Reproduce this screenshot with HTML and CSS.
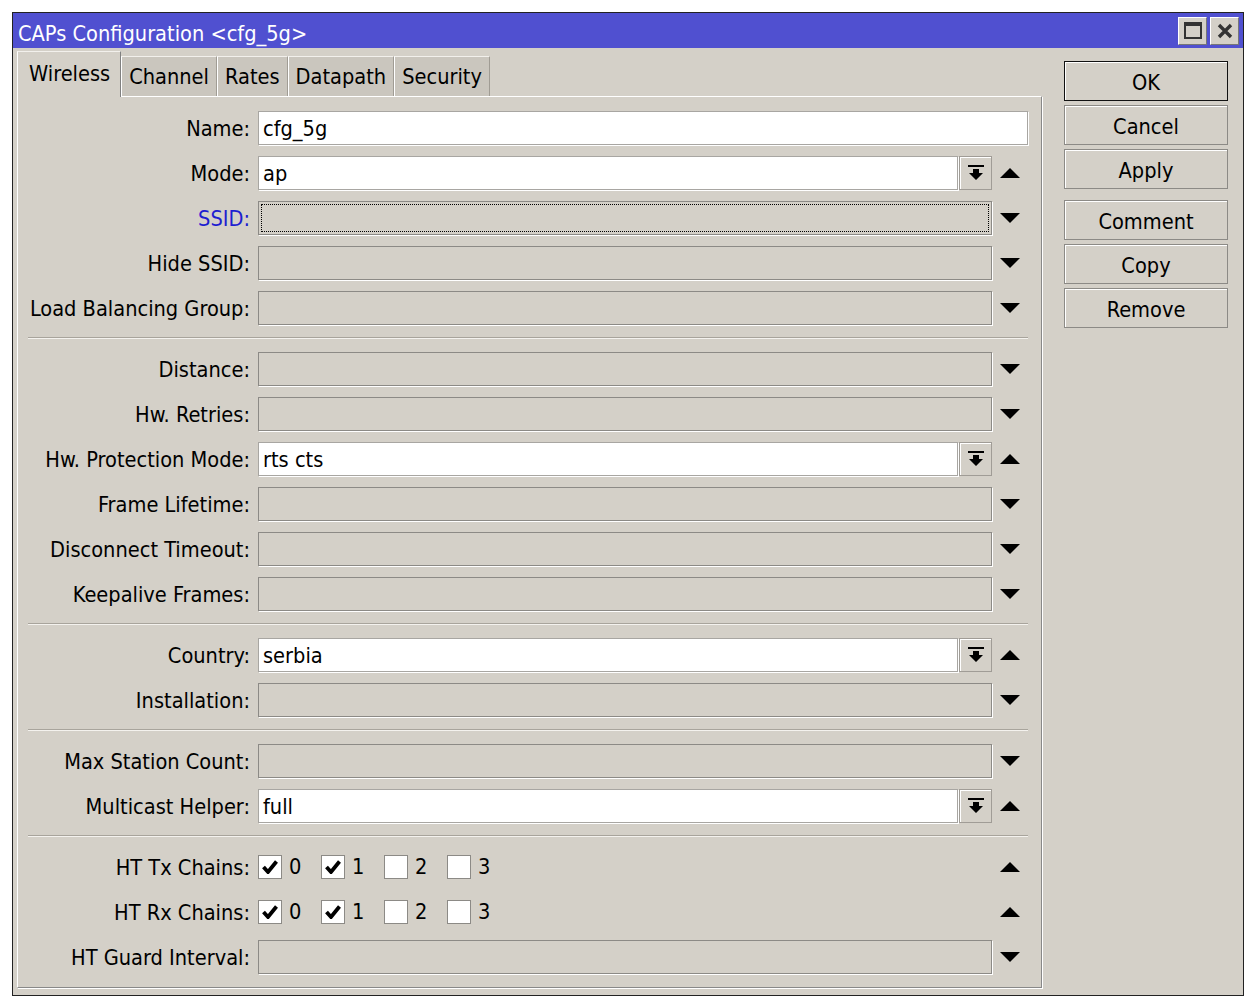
FILE: index.html
```html
<!DOCTYPE html>
<html lang="en">
  <head>
    <meta charset="UTF-8" />
    <title>CAPs Configuration</title>
    <link rel="stylesheet" href="styles.css">
  </head>
  <body>
    <div class="window">
      <div class="titlebar">
        <span class="title">CAPs Configuration &lt;cfg_5g&gt;</span>
        <div class="title-buttons">
          <div class="tbtn">
            <svg width="18" height="17" viewBox="0 0 18 17"><path d="M0 0h18v17H0zM2 4v11h14V4z" fill="#333"/></svg>
          </div>
          <div class="tbtn">
            <svg width="16" height="16" viewBox="0 0 16 16"><path d="M2 2l12 12M14 2L2 14" stroke="#333" stroke-width="3.4"/></svg>
          </div>
        </div>
      </div>

      <div class="content">
        <div class="main">
          <div class="tabs">
            <div class="tab active">Wireless</div>
            <div class="tab">Channel</div>
            <div class="tab">Rates</div>
            <div class="tab">Datapath</div>
            <div class="tab">Security</div>
          </div>

          <div class="panel">
            <div class="row">
              <div class="label">Name:</div>
              <div class="field">
                <div class="input white">cfg_5g</div>
              </div>
            </div>
            <div class="row">
              <div class="label">Mode:</div>
              <div class="field">
                <div class="input white">ap</div>
                <div class="drop"><svg width="16" height="15" viewBox="0 0 16 15"><path d="M0 0h16v2H0zM5 4h6v4h4l-7 7-7-7h4z"/></svg></div>
                <div class="arrow"><svg width="20" height="10" viewBox="0 0 20 10"><path d="M10 0L20 10H0z"/></svg></div>
              </div>
            </div>
            <div class="row">
              <div class="label link">SSID:</div>
              <div class="field">
                <div class="input focus"></div>
                <div class="arrow"><svg width="20" height="10" viewBox="0 0 20 10"><path d="M0 0h20L10 10z"/></svg></div>
              </div>
            </div>
            <div class="row">
              <div class="label">Hide SSID:</div>
              <div class="field">
                <div class="input"></div>
                <div class="arrow"><svg width="20" height="10" viewBox="0 0 20 10"><path d="M0 0h20L10 10z"/></svg></div>
              </div>
            </div>
            <div class="row">
              <div class="label">Load Balancing Group:</div>
              <div class="field">
                <div class="input"></div>
                <div class="arrow"><svg width="20" height="10" viewBox="0 0 20 10"><path d="M0 0h20L10 10z"/></svg></div>
              </div>
            </div>

            <div class="separator"></div>

            <div class="row">
              <div class="label">Distance:</div>
              <div class="field">
                <div class="input"></div>
                <div class="arrow"><svg width="20" height="10" viewBox="0 0 20 10"><path d="M0 0h20L10 10z"/></svg></div>
              </div>
            </div>
            <div class="row">
              <div class="label">Hw. Retries:</div>
              <div class="field">
                <div class="input"></div>
                <div class="arrow"><svg width="20" height="10" viewBox="0 0 20 10"><path d="M0 0h20L10 10z"/></svg></div>
              </div>
            </div>
            <div class="row">
              <div class="label">Hw. Protection Mode:</div>
              <div class="field">
                <div class="input white">rts cts</div>
                <div class="drop"><svg width="16" height="15" viewBox="0 0 16 15"><path d="M0 0h16v2H0zM5 4h6v4h4l-7 7-7-7h4z"/></svg></div>
                <div class="arrow"><svg width="20" height="10" viewBox="0 0 20 10"><path d="M10 0L20 10H0z"/></svg></div>
              </div>
            </div>
            <div class="row">
              <div class="label">Frame Lifetime:</div>
              <div class="field">
                <div class="input"></div>
                <div class="arrow"><svg width="20" height="10" viewBox="0 0 20 10"><path d="M0 0h20L10 10z"/></svg></div>
              </div>
            </div>
            <div class="row">
              <div class="label">Disconnect Timeout:</div>
              <div class="field">
                <div class="input"></div>
                <div class="arrow"><svg width="20" height="10" viewBox="0 0 20 10"><path d="M0 0h20L10 10z"/></svg></div>
              </div>
            </div>
            <div class="row">
              <div class="label">Keepalive Frames:</div>
              <div class="field">
                <div class="input"></div>
                <div class="arrow"><svg width="20" height="10" viewBox="0 0 20 10"><path d="M0 0h20L10 10z"/></svg></div>
              </div>
            </div>

            <div class="separator"></div>

            <div class="row">
              <div class="label">Country:</div>
              <div class="field">
                <div class="input white">serbia</div>
                <div class="drop"><svg width="16" height="15" viewBox="0 0 16 15"><path d="M0 0h16v2H0zM5 4h6v4h4l-7 7-7-7h4z"/></svg></div>
                <div class="arrow"><svg width="20" height="10" viewBox="0 0 20 10"><path d="M10 0L20 10H0z"/></svg></div>
              </div>
            </div>
            <div class="row">
              <div class="label">Installation:</div>
              <div class="field">
                <div class="input"></div>
                <div class="arrow"><svg width="20" height="10" viewBox="0 0 20 10"><path d="M0 0h20L10 10z"/></svg></div>
              </div>
            </div>

            <div class="separator"></div>

            <div class="row">
              <div class="label">Max Station Count:</div>
              <div class="field">
                <div class="input"></div>
                <div class="arrow"><svg width="20" height="10" viewBox="0 0 20 10"><path d="M0 0h20L10 10z"/></svg></div>
              </div>
            </div>
            <div class="row">
              <div class="label">Multicast Helper:</div>
              <div class="field">
                <div class="input white">full</div>
                <div class="drop"><svg width="16" height="15" viewBox="0 0 16 15"><path d="M0 0h16v2H0zM5 4h6v4h4l-7 7-7-7h4z"/></svg></div>
                <div class="arrow"><svg width="20" height="10" viewBox="0 0 20 10"><path d="M10 0L20 10H0z"/></svg></div>
              </div>
            </div>

            <div class="separator"></div>

            <div class="row">
              <div class="label">HT Tx Chains:</div>
              <div class="field">
                <div class="checks">
                  <div class="check"><span class="box"><svg width="16" height="14" viewBox="0 0 16 14"><path d="M1.5 7l4.5 5L14.5 1.5" fill="none" stroke="#000" stroke-width="3.8"/></svg></span>0</div>
                  <div class="check"><span class="box"><svg width="16" height="14" viewBox="0 0 16 14"><path d="M1.5 7l4.5 5L14.5 1.5" fill="none" stroke="#000" stroke-width="3.8"/></svg></span>1</div>
                  <div class="check"><span class="box"></span>2</div>
                  <div class="check"><span class="box"></span>3</div>
                </div>
                <div class="arrow"><svg width="20" height="10" viewBox="0 0 20 10"><path d="M10 0L20 10H0z"/></svg></div>
              </div>
            </div>
            <div class="row">
              <div class="label">HT Rx Chains:</div>
              <div class="field">
                <div class="checks">
                  <div class="check"><span class="box"><svg width="16" height="14" viewBox="0 0 16 14"><path d="M1.5 7l4.5 5L14.5 1.5" fill="none" stroke="#000" stroke-width="3.8"/></svg></span>0</div>
                  <div class="check"><span class="box"><svg width="16" height="14" viewBox="0 0 16 14"><path d="M1.5 7l4.5 5L14.5 1.5" fill="none" stroke="#000" stroke-width="3.8"/></svg></span>1</div>
                  <div class="check"><span class="box"></span>2</div>
                  <div class="check"><span class="box"></span>3</div>
                </div>
                <div class="arrow"><svg width="20" height="10" viewBox="0 0 20 10"><path d="M10 0L20 10H0z"/></svg></div>
              </div>
            </div>
            <div class="row">
              <div class="label">HT Guard Interval:</div>
              <div class="field">
                <div class="input"></div>
                <div class="arrow"><svg width="20" height="10" viewBox="0 0 20 10"><path d="M0 0h20L10 10z"/></svg></div>
              </div>
            </div>
          </div>
        </div>

        <div class="side">
          <div class="btn default">OK</div>
          <div class="btn">Cancel</div>
          <div class="btn">Apply</div>
          <div class="btn group">Comment</div>
          <div class="btn">Copy</div>
          <div class="btn">Remove</div>
        </div>
      </div>
    </div>
  </body>
</html>
```

FILE: styles.css
```css
body {
  margin: 0;
  background: #ffffff;
  font-family: "DejaVu Sans Condensed", "DejaVu Sans", sans-serif;
  font-stretch: condensed;
  font-size: 21.6px;
  color: #000;
}

.window {
  margin: 12px 0 0 12px;
  width: 1232px;
  height: 984px;
  box-sizing: border-box;
  border: 1px solid #222;
  background: #d4d0c8;
  display: flex;
  flex-direction: column;
}

.titlebar {
  height: 35px;
  box-sizing: border-box;
  background: #5050d0;
  color: #fff;
  display: flex;
  align-items: center;
  justify-content: space-between;
  padding: 0 4px 0 5px;
}

.title {
  line-height: 35px;
  padding-top: 5px;
}

.title-buttons {
  display: flex;
  gap: 3px;
}

.tbtn {
  width: 29px;
  height: 28px;
  box-sizing: border-box;
  background: #d4d0c8;
  border: 1px solid;
  border-color: #fff #777 #777 #fff;
  display: flex;
  align-items: center;
  justify-content: center;
}

.content {
  display: flex;
  flex: 1;
}

.main {
  margin-left: 4px;
  padding-top: 3px;
  width: 1025px;
}

.tabs {
  display: flex;
  align-items: flex-end;
  height: 45px;
}

.tab {
  height: 40px;
  box-sizing: border-box;
  padding: 0 7px 0 7px;
  line-height: 40px;
  background: #cac6be;
  border-top: 1px solid #f2f0ec;
  border-left: 1px solid #fff;
  border-right: 1px solid #a09c94;
}

.tab.active {
  height: 46px;
  margin-bottom: -1px;
  padding: 0 10px 0 11px;
  line-height: 44px;
  background: #d4d0c8;
  border-right-color: #808080;
  position: relative;
  z-index: 1;
}

.panel {
  height: 892px;
  box-sizing: border-box;
  border: 1px solid;
  border-color: #fff #888 #888 #fff;
  box-shadow: 1px 1px 0 #fff;
  padding: 14px 13px 0 0;
  display: flex;
  flex-direction: column;
}

.row {
  display: flex;
  flex-shrink: 0;
  height: 34px;
  margin-bottom: 11px;
}

.label {
  width: 232px;
  margin-right: 8px;
  text-align: right;
  line-height: 36px;
  white-space: nowrap;
}

.label.link {
  color: #1e1ed0;
}

.field {
  flex: 1;
  display: flex;
}

.input {
  flex: 1;
  box-sizing: border-box;
  border: 1px solid #8c8a86;
  box-shadow: 1px 1px 0 #fff;
  padding-left: 4px;
  line-height: 34px;
}

.input.white {
  background: #fff;
  border-color: #a8a6a2;
}

.input.focus {
  outline: 1px dotted #000;
  outline-offset: -4px;
}

.drop {
  width: 33px;
  margin-left: 1px;
  box-sizing: border-box;
  border: 1px solid #a09c96;
  box-shadow: inset 1px 1px 0 #fff;
  display: flex;
  align-items: center;
  justify-content: center;
  padding-bottom: 2px;
}

.arrow {
  width: 36px;
  display: flex;
  align-items: center;
  justify-content: center;
}

.separator {
  flex-shrink: 0;
  height: 1px;
  background: #a8a49c;
  border-bottom: 1px solid #f4f2ee;
  margin: 1px 0 13px 10px;
}

.checks {
  flex: 1;
  display: flex;
  align-items: center;
}

.check {
  width: 63px;
  display: flex;
  align-items: center;
  line-height: 36px;
}

.box {
  width: 24px;
  height: 24px;
  box-sizing: border-box;
  background: #fff;
  border: 1px solid #8c8a86;
  margin-right: 7px;
  display: flex;
  align-items: center;
  justify-content: center;
}

.side {
  margin-left: 22px;
  padding-top: 13px;
  display: flex;
  flex-direction: column;
  gap: 4px;
}

.btn {
  width: 164px;
  height: 40px;
  box-sizing: border-box;
  border: 1px solid #8c8a86;
  box-shadow: inset 1px 1px 0 #fff;
  text-align: center;
  line-height: 42px;
}

.btn.default {
  border-color: #111;
}

.btn.group {
  margin-top: 7px;
}
```
